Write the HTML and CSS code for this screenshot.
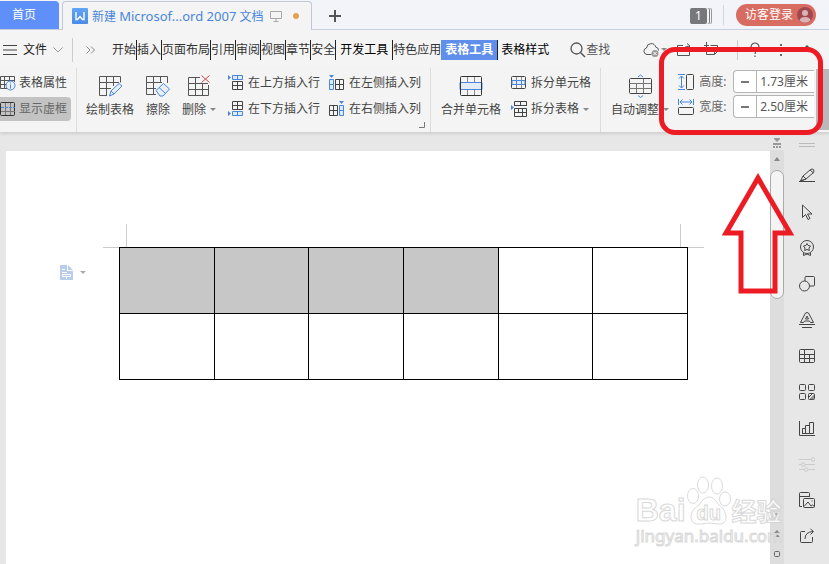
FILE: index.html
```
<!DOCTYPE html>
<html lang="zh-CN">
<head>
    <meta charset="UTF-8">
    <meta name="viewport" content="width=device-width, initial-scale=1.0">
    <title>新建 Microsoft Word 2007 文档</title>
    <link rel="stylesheet" href="styles.css">
</head>
<body>

    <!-- Title bar -->
    <header class="titlebar">
        <button class="home-tab" type="button">首页</button>
        <div class="doc-tab">
            <svg class="doc-logo" width="16" height="16" viewBox="0 0 16 16"><defs><linearGradient id="lg" x2="0" y2="1"><stop stop-color="#62a4f5"/><stop offset="1" stop-color="#4a8bea"/></linearGradient></defs><rect width="16" height="16" rx="1" fill="url(#lg)"/><path d="M4 4v7.5h1.5L8 8.500l2.500 3H12V4" fill="none" stroke="#fff" stroke-width="1.400"/></svg>
            <span class="doc-name">新建 <span class="latin">Microsof...ord 2007</span> 文档</span>
            <svg class="screen-icon" width="12" height="12" viewBox="0 0 12 12"><path d="M.5 1.500h11v7H.5zM6 8.500v3M3.500 11.500h5" fill="none" stroke="#a9a9a9"/></svg>
            <span class="unsaved"></span>
        </div>
        <button class="new-tab" type="button" aria-label="新建"><svg width="12" height="12" viewBox="0 0 12 12"><path d="M6 0v12M0 6h12" stroke="#555" stroke-width="2"/></svg></button>
        <div class="account">
            <span class="count">1</span>
            <i class="account-bar"></i>
            <button class="login" type="button">访客登录
                <svg width="16" height="16" viewBox="0 0 16 16"><circle cx="8" cy="8" r="8" fill="#a0484e"/><circle cx="8" cy="6" r="3" fill="#d9b3b6"/><path d="M2.500 13.500Q3 10 8 10t5.500 3.500A8 8 0 0 1 2.500 13.500z" fill="#d9b3b6"/></svg>
            </button>
        </div>
    </header>

    <!-- Menu bar -->
    <nav class="menubar">
        <button class="file-menu" type="button">
            <svg width="14" height="10" viewBox="0 0 14 10"><path d="M0 .5h14M0 5h14M0 9.500h14" stroke="#444"/></svg>
            文件
            <svg width="10" height="6" viewBox="0 0 10 6"><path d="M.5.5L5 5 9.500.5" fill="none" stroke="#999"/></svg>
        </button>
        <svg class="more" width="9" height="8" viewBox="0 0 9 8"><path d="M.5.5L4 4 .5 7.500M5 .5L8.500 4 5 7.500" fill="none" stroke="#888"/></svg>
        <div class="menu-tabs">
            <button type="button">开始</button>
            <button type="button">插入</button>
            <button type="button">页面布局</button>
            <button type="button">引用</button>
            <button type="button">审阅</button>
            <button type="button">视图</button>
            <button type="button">章节</button>
            <button type="button">安全</button>
            <button class="wide strong" type="button">开发工具</button>
            <button class="plain" type="button">特色应用</button>
            <button class="wide active" type="button">表格工具</button>
            <button class="plain last strong" type="button">表格样式</button>
        </div>
        <button class="search" type="button">
            <svg width="16" height="16" viewBox="0 0 16 16"><circle cx="6.500" cy="6.500" r="5.500" fill="none" stroke="#555" stroke-width="1.300"/><path d="M10.500 10.500l4.500 4.500" stroke="#555" stroke-width="1.500"/></svg>查找
        </button>
        <div class="menu-icons">
            <svg width="18" height="16" viewBox="0 0 18 16"><path d="M8.500 12.500H4A3.300 3.300 0 0 1 3.500 6 4.700 4.700 0 0 1 12.700 5 3.400 3.400 0 0 1 15.500 8.500" fill="none" stroke="#555"/><circle cx="12" cy="11.500" r="3.500" fill="#999"/><path d="M10.500 10l3 3m0-3l-3 3" stroke="#fff"/></svg>
            <i class="caret"></i>
            <svg class="i-share" width="16" height="16" viewBox="0 0 16 16"><path d="M7 3.500H1.500v10h12V9M5.500 9.500Q6 5 13.500 4M11 1.500l3 2.500-3 3" fill="none" stroke="#555"/></svg>
            <svg class="i-window" width="18" height="16" viewBox="0 0 18 16"><path d="M4.500 0v6M2 3.500h5M8.500 3.500h7v6l-3 3h-8v-5M15.500 9.500h-3v3" fill="none" stroke="#555"/></svg>
            <i class="bar"></i>
            <svg width="10" height="16" viewBox="0 0 10 16"><path d="M1 5a4 4 0 1 1 6 3.500Q5 9.500 5 12M5 13.500v1.500" fill="none" stroke="#555" stroke-width="1.200"/></svg>
            <svg class="i-dots" width="4" height="14" viewBox="0 0 4 14"><path d="M1 1h2v2H1zM1 6h2v2H1zM1 11h2v2H1z" fill="#666"/></svg>
            <svg class="i-up" width="10" height="10" viewBox="0 0 10 10"><path d="M.5 5.500L5 1l4.500 4.500" fill="none" stroke="#555" stroke-width="1.500"/></svg>
        </div>
    </nav>

    <!-- Ribbon: table tools -->
    <section class="ribbon">
        <div class="group props">
            <button class="row" type="button"><svg width="16" height="16" viewBox="0 0 16 16"><path d="M8 13.500H.5v-12h14V7M0 5.500h14M0 9.500h8M4.500 2v11M9.500 2v5" fill="none" stroke="#555"/><circle cx="10.500" cy="10.500" r="4.500" fill="#eaf1fd" stroke="#4a86dc"/><path d="M10.500 9.500v4M10.500 7.500v1" stroke="#4a86dc"/></svg>表格属性</button>
            <button class="row pressed" type="button"><svg width="16" height="16" viewBox="0 0 16 16"><rect x=".5" y="1.500" width="14" height="13" rx="1" fill="none" stroke="#333"/><path d="M5.500 2v12M10.500 2v12M1 10.500h14" stroke="#777"/><path d="M1 6.500h14" stroke="#4a86dc" stroke-dasharray="3 1"/></svg>显示虚框</button>
        </div>
        <div class="group draw">
            <button class="big" type="button"><svg width="24" height="24" viewBox="0 0 24 24"><path d="M9 21.500H1.500v-19h21v6M1 8.500h20M1 14.500h12M8.500 3v18M15.500 3v9" fill="none" stroke="#555"/><path d="M11.500 22l1.500-5 8-7.500 3 2.500-8 8zM13 17l3 3" fill="#e8effb" stroke="#4a86dc"/></svg>绘制表格</button>
            <button class="big" type="button"><svg width="24" height="24" viewBox="0 0 24 24"><path d="M10 20.500H.5v-18h21V9M0 8.500h16M0 14.500h10M7.500 3v17M14.500 3v6" fill="none" stroke="#555"/><path d="M10 16.500l7.500-7 6 5.500-6.500 7h-3zM13 13.500l6.500 6" fill="#e8effb" stroke="#4a86dc"/></svg>擦除</button>
            <button class="big" type="button"><svg width="24" height="24" viewBox="0 0 24 24"><path d="M13 3.500H1.500v18h20V11M1 9.500h20M1 15.500h20M8.500 4v17M15.500 9v12" fill="none" stroke="#555"/><path d="M14.500 1.500l8 7m0-7l-8 7" stroke="#d6494b"/></svg><span>删除<i class="caret"></i></span></button>
        </div>
        <div class="group insert">
            <button class="row" type="button"><svg width="16" height="16" viewBox="0 0 16 16"><path d="M0 0l3 2.500L0 5z" fill="#4a86dc"/><path d="M4.500.5h10v4h-10zM9.500 0v4" fill="#dfeafb" stroke="#4a86dc"/><path d="M4.500 6.500h10v8h-10zM4 10.500h11M9.500 7v8" fill="none" stroke="#444"/></svg>在上方插入行</button>
            <button class="row" type="button"><svg width="16" height="16" viewBox="0 0 16 16"><path d="M0 0h5l-2.500 3z" fill="#4a86dc"/><path d="M.5 4.500h4v10h-4zM1 9.500h4" fill="#dfeafb" stroke="#4a86dc"/><path d="M6.500 4.500h8v10h-8zM6 9.500h9M10.500 5v9" fill="none" stroke="#444"/></svg>在左侧插入列</button>
            <button class="row" type="button"><svg width="16" height="16" viewBox="0 0 16 16"><path d="M0 10l3 2.500L0 15z" fill="#4a86dc"/><path d="M4.500 10.500h10v4h-10zM9.500 11v4" fill="#dfeafb" stroke="#4a86dc"/><path d="M4.500.5h10v8h-10zM4 4.500h11M9.500 1v8" fill="none" stroke="#444"/></svg>在下方插入行</button>
            <button class="row" type="button"><svg width="16" height="16" viewBox="0 0 16 16"><path d="M10 0h5l-2.500 3z" fill="#4a86dc"/><path d="M10.500 4.500h4v10h-4zM11 9.500h4" fill="#dfeafb" stroke="#4a86dc"/><path d="M.5 4.500h8v10h-8zM0 9.500h9M4.500 5v9" fill="none" stroke="#444"/></svg>在右侧插入列</button>
            <svg class="launcher" width="6" height="6" viewBox="0 0 6 6"><path d="M5.500 0v5.500H0" fill="none" stroke="#777"/></svg>
        </div>
        <div class="group merge">
            <button class="big" type="button"><svg width="24" height="24" viewBox="0 0 24 24"><path d="M8.500 3v5M15.500 3v5M8.500 16v5M15.500 16v5" stroke="#888"/><path d="M1 8.500h22v7H1z" fill="#e3ebf7" stroke="#4a86dc"/><rect x="1.500" y="2.500" width="21" height="19" rx="1" fill="none" stroke="#333"/></svg>合并单元格</button>
            <div class="stack">
                <button class="row" type="button"><svg width="16" height="16" viewBox="0 0 16 16"><path d="M5.500 1v4M10.500 1v4M5.500 10v4M10.500 10v4" stroke="#888"/><rect x=".5" y="1.500" width="14" height="12" rx="1" fill="none" stroke="#444"/><path d="M1 5.500h13v4H1zM5.500 5v5M10.500 5v5" fill="#e3ebf7" stroke="#4a86dc"/></svg>拆分单元格</button>
                <button class="row" type="button"><svg width="16" height="16" viewBox="0 0 16 16"><path d="M0 4l3 2.500L0 9z" fill="#4a86dc"/><path d="M3.500 5V.5h12V5M3 4.500h13M9.500 0v4M3.500 7.500h12v8h-12zM3 11.500h13M7.500 8v3M11.500 8v7" fill="none" stroke="#444"/></svg>拆分表格<i class="caret"></i></button>
            </div>
        </div>
        <div class="group fit">
            <button class="big" type="button"><svg width="24" height="24" viewBox="0 0 24 24"><rect x="1.500" y="4.500" width="22" height="15" rx="1" fill="none" stroke="#444"/><path d="M1 9.500h22M1 14.500h22M8.500 9v10M15.500 5v14" stroke="#777"/><path d="M10 3l2.500-2L15 3M10 21.500l2.500 2 2.500-2" fill="none" stroke="#4a86dc"/></svg><span>自动调整<i class="caret"></i></span></button>
            <div class="sizes">
                <div class="size">
                    <svg width="16" height="18" viewBox="0 0 16 18"><path d="M0 1.500h7M0 16.500h7M3.500 3v12M1 5.500L3.500 3 6 5.500M1 12.500L3.500 15 6 12.500" fill="none" stroke="#4a86dc"/><rect x="8.500" y="1.500" width="7" height="15" rx="1" fill="none" stroke="#444"/></svg>
                    <label for="height">高度:</label>
                    <div class="stepper"><button type="button" aria-label="减小高度"></button><input id="height" type="text" value="1.73厘米"></div>
                </div>
                <div class="size">
                    <svg width="16" height="18" viewBox="0 0 16 18"><path d="M.5 1v6M15.500 1v6M2 4h12M4.500 1.500L2 4l2.500 2.500M11.500 1.500L14 4l-2.500 2.500" fill="none" stroke="#4a86dc"/><rect x=".5" y="9.500" width="15" height="7" rx="1" fill="none" stroke="#444"/></svg>
                    <label for="width">宽度:</label>
                    <div class="stepper"><button type="button" aria-label="减小宽度"></button><input id="width" type="text" value="2.50厘米"></div>
                </div>
            </div>
        </div>
        <button class="ribbon-next" type="button" aria-label="更多"></button>
    </section>

    <!-- Document area -->
    <main class="workspace">
        <div class="page">
            <button class="paste-hint" type="button" aria-label="选项"><svg width="13" height="15" viewBox="0 0 13 15"><path d="M0 0h8l5 5v10H0z" fill="#b8cdea"/><path d="M7.500 0v5.500H13M2 4.500h3M2 7.500h5M2.500 9.500h8v2h-8zM6.500 12v2" fill="none" stroke="#fff"/></svg><i class="caret"></i></button>
            <div class="sheet">
                <div class="corners"><span></span><span></span></div>
                <table class="word-table">
                    <tr><td class="sel"></td><td class="sel"></td><td class="sel"></td><td class="sel"></td><td></td><td></td></tr>
                    <tr><td></td><td></td><td></td><td></td><td></td><td></td></tr>
                </table>
            </div>
        </div>
        <div class="scrollbar">
            <svg class="ruler-toggle" width="10" height="10" viewBox="0 0 10 10"><path d="M2 0h6v1L5 4 2 1zM1 5h8v2H1zM1 8h2v2H1zM4 8h2v2H4zM7 8h2v2H7z" fill="#999"/></svg>
            <div class="track">
                <svg width="6" height="4" viewBox="0 0 6 4"><path d="M3 0l3 4H0z" fill="#888"/></svg>
                <div class="thumb"></div>
                <div class="jumps">
                    <svg width="6" height="4" viewBox="0 0 6 4"><path d="M0 0h6L3 4z" fill="#888"/></svg>
                    <svg width="6" height="8" viewBox="0 0 6 8"><path d="M3 0l3 3H0zM3 4l3 3H0z" fill="#888"/></svg>
                    <svg width="6" height="6" viewBox="0 0 6 6"><rect x=".5" y=".5" width="5" height="5" rx="1" fill="none" stroke="#666"/></svg>
                </div>
            </div>
        </div>
        <aside class="sidebar">
            <div class="grip"></div>
            <button type="button" aria-label="编辑"><svg viewBox="0 0 16 16"><path d="M0 13.500h16M1.500 13L4 8l7.500-6.500q1.500-1 3 0 1 1.500 0 3L7 11zM4 8l3 3M1.500 13L7 11M11 2l3.500 3"/></svg></button>
            <button type="button" aria-label="选择"><svg viewBox="0 0 16 16"><path d="M3.500 1v12.500l3-3 2.500 5 2-1-2.500-4.500h4.500z"/></svg></button>
            <button type="button" aria-label="素材"><svg viewBox="0 0 16 16"><circle cx="8" cy="7" r="6.500"/><path d="M8 3.500l1.200 2 2.300.5-1.500 2 .3 2.500L8 9.500 5.700 10.500 6 8 4.500 6l2.300-.5zM4.500 13v2.500L8 14l3.500 1.500V13" /></svg></button>
            <button type="button" aria-label="形状"><svg viewBox="0 0 16 16"><path d="M6 5V1.500q0-1 1-1h7.500q1 0 1 1V9q0 1-1 1H11"/><circle cx="5.500" cy="10" r="5"/></svg></button>
            <button type="button" aria-label="艺术字"><svg viewBox="0 0 16 16"><path d="M1.500 10.500l5-9.500q1.500-1 3 0l5 9.500h-3L10.500 9h-5l-1 1.500zM6.500 7L8 4l1.500 3zM0 12.500h16M3 15.500h10"/></svg></button>
            <button type="button" aria-label="表格"><svg viewBox="0 0 16 16"><rect x=".5" y="1.500" width="15" height="13" rx="1"/><path d="M0 6.500h16M0 10.500h16M5.500 2v12M10.500 6v8"/></svg></button>
            <button type="button" aria-label="组件"><svg viewBox="0 0 16 16"><rect x=".5" y=".5" width="6" height="6" rx="1"/><rect x="9.500" y=".5" width="6" height="6" rx="1"/><rect x=".5" y="9.500" width="6" height="6" rx="1"/><rect x="9.500" y="9.500" width="6" height="6" rx="1"/><path d="M9.500 13.500l4-4M11 15.500l4.500-4.500M13 15.500l2.500-2.500"/></svg></button>
            <button type="button" aria-label="图表"><svg viewBox="0 0 16 16"><path d="M.5 1v14.500H16M3.500 13.500v-5h3v5M6.500 13.500v-8h4v8M10.500 13.500V2.500h4v11zM3 13.500h11"/></svg></button>
            <button class="off" type="button" aria-label="设置" disabled><svg viewBox="0 0 16 16"><path d="M0 3.500h12M6 8.500h10M0 8.500h2M0 13.500h5M9 13.500h7"/><circle cx="14" cy="3.500" r="1.800"/><circle cx="4" cy="8.500" r="1.800"/><circle cx="7" cy="13.500" r="1.800"/></svg></button>
            <button type="button" aria-label="图片"><svg viewBox="0 0 16 16"><path d="M3 14.500H.5v-13q0-1 1-1h8q1 0 1 1V5M0 4.500h10"/><rect x="4.500" y="6.500" width="11" height="9" rx="1"/><path d="M5 14.500l4-4.500 3 4 1.500-1 2 1.500M12.500 9h1"/></svg></button>
            <button type="button" aria-label="分享"><svg viewBox="0 0 16 16"><path d="M6 3.500H2.500q-1 0-1 1v9q0 1 1 1h10q1 0 1-1V9M6 11q0-7 8-7.500M11.500 1l3 2.500-3 3"/></svg></button>
        </aside>
    </main>

    <!-- Watermark -->
    <div class="watermark">
        <div class="wm-brand">
            <span class="wm-latin">Bai</span>
            <span class="wm-paw">
                <svg width="46" height="50" viewBox="0 0 46 50"><g fill="#fff" stroke="#d6d6d6"><ellipse cx="7" cy="20" rx="5.500" ry="7.500"/><ellipse cx="17" cy="9" rx="5.500" ry="8"/><ellipse cx="31" cy="10" rx="5.500" ry="8"/><ellipse cx="39" cy="23" rx="5.500" ry="7"/><path d="M23 21q5 0 9 7 8 6 8 13 0 8-8 7-9-2-18 0-9 1-9-7 0-7 8-12 5-8 10-8z"/></g></svg>
                <b>du</b>
            </span>
            <span class="wm-cjk">经验</span>
        </div>
        <div class="wm-url">jingyan.baidu.com</div>
    </div>

    <!-- Red callouts -->
    <div class="callout-box"></div>
    <svg class="callout-arrow" width="72" height="122" viewBox="0 0 72 122"><path d="M36 5L4 60h15v58h34V60h15z" fill="none" stroke="#ed1c24" stroke-width="5"/></svg>

</body>
</html>
```
FILE: styles.css
```
* {
    box-sizing: border-box;
}
body {
    margin: 0;
    height: 100vh;
    display: flex;
    flex-direction: column;
    overflow: hidden;
    position: relative;
    font-family: "Noto Sans", "Noto Sans CJK SC", sans-serif;
    font-size: 12px;
    line-height: 18px;
    color: #444;
    background-color: #e7e7e7;
}
button {
    font: inherit;
    color: inherit;
    background: none;
    border: none;
    padding: 0;
    white-space: nowrap;
}
svg {
    display: block;
    flex: none;
}
.caret {
    display: inline-block;
    flex: none;
    border: 3px solid transparent;
    border-top-color: #888;
    border-bottom: 0;
}

/* title bar */
.titlebar {
    display: flex;
    height: 30px;
    padding-top: 1px;
    background-color: #f3f4f9;
    box-shadow: inset 0 -1px #c6cfdf;
}
.home-tab {
    width: 59px;
    height: 28px;
    padding-right: 11px;
    background-color: #5f8ff9;
    color: #fff;
    border-radius: 0 4px 0 0;
}
.doc-tab {
    display: flex;
    align-items: center;
    width: 250px;
    margin-left: 3px;
    padding-left: 9px;
    background-color: #f4f4f4;
    border: 1px solid #c0c7d6;
    border-bottom: none;
    border-radius: 4px 4px 0 0;
}
.doc-name {
    margin-left: 4px;
    color: #4a86dc;
    white-space: nowrap;
}
.latin {
    font-size: 13px;
}
.screen-icon {
    margin-left: 7px;
}
.unsaved {
    width: 6px;
    height: 6px;
    margin-left: auto;
    margin-right: 12px;
    border-radius: 50%;
    background-color: #e8a052;
}
.new-tab {
    padding: 0 17px;
}
.account {
    display: flex;
    align-items: center;
    margin-left: auto;
    padding-right: 13px;
    padding-bottom: 2px;
}
.count {
    width: 17px;
    height: 16px;
    line-height: 16px;
    margin-top: 2px;
    text-align: center;
    color: #fff;
    background-color: #77787a;
    border-radius: 2px;
    box-shadow: 2px 0 #f3f4f9, 3px 0 #77787a, 4px 0 #f3f4f9, 5px 0 #999;
}
.account-bar {
    width: 1px;
    height: 20px;
    margin: 0 12px 0 16px;
    background-color: #d4d6dc;
}
.login {
    display: flex;
    align-items: center;
    gap: 4px;
    height: 22px;
    padding: 0 3px 0 9px;
    border-radius: 11px;
    background-color: #d96c60;
    color: #fff;
}

/* menu bar */
.menubar {
    display: flex;
    align-items: center;
    height: 38px;
    padding-top: 1px;
    background-color: #f4f4f4;
}
.file-menu {
    display: flex;
    align-items: center;
    gap: 6px;
    height: 24px;
    padding: 0 9px 0 3px;
    border-right: 1px solid #ccc;
    color: #222;
}
.more {
    margin-left: 13px;
}
.menu-tabs {
    display: flex;
    margin-left: 17px;
    color: #333;
}
.menu-tabs button {
    height: 20px;
    border-right: 1px solid #222;
}
.menu-tabs .wide {
    padding: 0 4px;
}
.menu-tabs .plain {
    border-right: none;
}
.menu-tabs .last {
    padding: 0 4px 0 3px;
}
.menu-tabs .strong {
    color: #000;
}
.menu-tabs .active {
    background-color: #5f8fea;
    color: #fff;
    font-weight: bold;
}
.search {
    display: flex;
    align-items: center;
    margin-left: 17px;
    color: #555;
}
.menu-icons {
    display: flex;
    align-items: center;
    margin-left: auto;
    padding-right: 17px;
}
.i-share {
    margin-left: 9px;
}
.i-window {
    margin-left: 10px;
}
.bar {
    width: 1px;
    height: 20px;
    margin: 0 12px 0 17px;
    background-color: #ccc;
}
.i-dots {
    margin-left: 19px;
}
.i-up {
    margin-left: 19px;
}

/* ribbon */
.ribbon {
    display: flex;
    height: 64px;
    background-color: #f4f4f4;
    box-shadow: 0 2px 3px #cfcfcf;
    z-index: 1;
}
.group {
    display: flex;
    flex: none;
    align-items: flex-start;
    padding-top: 3px;
    border-right: 1px solid #dcdcdc;
}
.row {
    display: flex;
    align-items: center;
    gap: 4px;
    height: 24px;
}
.big {
    display: flex;
    flex-direction: column;
    align-items: center;
    gap: 3px;
    padding-top: 3px;
}
.big .caret {
    margin: 0 0 3px 4px;
    vertical-align: middle;
}
.props {
    flex-direction: column;
    gap: 2px;
    width: 77px;
}
.props .row {
    gap: 3px;
    padding-right: 4px;
}
.props .pressed {
    color: #666;
    background-color: #c3c3c3;
    border-radius: 0 4px 4px 0;
}
.draw {
    padding-left: 9px;
    gap: 12px;
    border-right: none;
}
.insert {
    position: relative;
    display: grid;
    grid-template-columns: auto auto;
    align-content: start;
    gap: 2px 9px;
    padding-left: 12px;
    padding-right: 9px;
}
.launcher {
    position: absolute;
    right: 5px;
    bottom: 4px;
}
.merge {
    gap: 10px;
    padding-left: 10px;
    padding-right: 9px;
}
.stack {
    display: grid;
    gap: 2px;
}
.fit {
    flex: 1;
    min-width: 0;
    gap: 9px;
    padding-top: 2px;
    padding-left: 10px;
    border-right: none;
    overflow: hidden;
}
.fit .big {
    padding-top: 4px;
}
.sizes {
    display: grid;
    gap: 2px;
    flex: 1;
}
.size {
    display: flex;
    align-items: center;
    height: 23px;
}
.size label {
    width: 39px;
    padding-left: 5px;
    color: #666;
}
.stepper {
    display: flex;
    flex: 1;
    min-width: 0;
    height: 23px;
    background-color: #fff;
    border: 1px solid #b5b5b5;
    border-right: none;
    border-radius: 4px 0 0 4px;
}
.stepper button {
    flex: none;
    width: 23px;
    border-right: 1px solid #b5b5b5;
    background: linear-gradient(#777, #777) center / 8px 2px no-repeat;
}
.stepper input {
    flex: 1;
    min-width: 0;
    padding: 0 0 0 3px;
    border: none;
    background: none;
    font: inherit;
    color: #555;
}
.ribbon-next {
    flex: none;
    width: 13px;
    height: 61px;
    margin-left: 2px;
    margin-top: 1px;
    background-color: #b9b9bb;
}

/* document */
.workspace {
    display: flex;
    flex: 1;
    min-height: 0;
}
.page {
    display: flex;
    align-items: flex-start;
    flex: 1;
    margin: 19px 0 0 6px;
    padding: 73px 66px 0 54px;
    background-color: #fff;
}
.paste-hint {
    display: flex;
    align-items: center;
    gap: 7px;
    margin-top: 41px;
}
.paste-hint .caret {
    border-top-color: #aaa;
}
.sheet {
    flex: 1;
    margin-left: 17px;
}
.corners {
    display: flex;
    justify-content: space-between;
    border-bottom: 1px solid #ccc;
}
.corners span {
    width: 24px;
    height: 23px;
    border-right: 1px solid #ccc;
}
.corners span:last-child {
    border-right: none;
    border-left: 1px solid #ccc;
}
.word-table {
    width: calc(100% - 32px);
    margin: -1px 16px 0;
    border-collapse: collapse;
    table-layout: fixed;
}
.word-table td {
    height: 66px;
    padding: 0;
    border: 1px solid #000;
}
.word-table .sel {
    background-color: #c7c7c7;
}
.scrollbar {
    display: flex;
    flex-direction: column;
    align-items: center;
    width: 14px;
    padding-top: 6px;
}
.track {
    display: flex;
    flex-direction: column;
    align-items: center;
    flex: 1;
    width: 14px;
    margin-top: 2px;
    padding: 7px 0;
    background-color: #ddd;
}
.thumb {
    width: 14px;
    height: 129px;
    margin-top: 9px;
    border: 1px solid #aaa;
    border-radius: 7px;
    background-color: #f4f4f4;
}
.jumps {
    display: flex;
    flex-direction: column;
    gap: 13px;
    margin-top: auto;
}
.sidebar {
    width: 45px;
}
.sidebar button {
    display: flex;
    align-items: center;
    justify-content: center;
    width: 100%;
    height: 36px;
}
.sidebar svg {
    width: 16px;
    height: 16px;
    fill: none;
    stroke: #444;
}
.sidebar .off svg {
    stroke: #ccc;
}
.grip {
    width: 16px;
    height: 4px;
    margin: 11px auto;
    border-top: 1px solid #bbb;
    border-bottom: 1px solid #bbb;
}

/* watermark over the page corner */
.watermark {
    position: absolute;
    right: 46px;
    bottom: 18px;
    color: #fff;
    -webkit-text-stroke: 1px #d2d2d2;
    opacity: 0.85;
}
.wm-brand {
    display: flex;
    align-items: flex-end;
}
.wm-latin {
    font: bold 32px/32px "Liberation Sans", sans-serif;
}
.wm-paw {
    position: relative;
}
.wm-paw b {
    position: absolute;
    left: 11px;
    bottom: 3px;
    font: bold 20px/20px "Liberation Sans", sans-serif;
}
.wm-cjk {
    font: bold 25px/32px "Noto Sans CJK SC", sans-serif;
}
.wm-url {
    font: 17px/20px "Noto Sans", sans-serif;
}

/* callouts */
.callout-box {
    position: absolute;
    z-index: 2;
    top: 47px;
    right: 6px;
    width: 164px;
    height: 88px;
    border: 5px solid #ed1c24;
    border-radius: 16px;
}
.callout-arrow {
    position: absolute;
    z-index: 2;
    top: 173px;
    right: 35px;
}
```
